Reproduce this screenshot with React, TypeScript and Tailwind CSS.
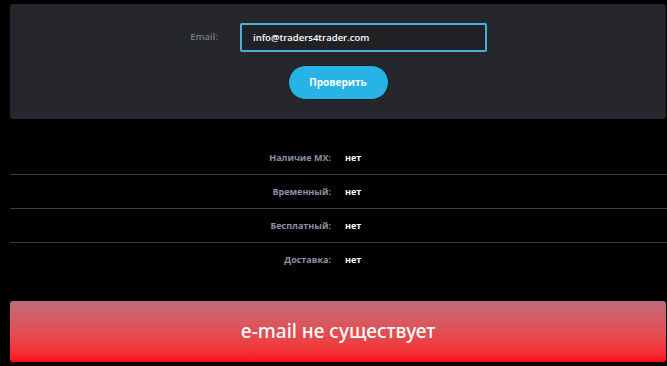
import { useState } from "react";

const filas = [
  { k: "mx", label: "Наличие MX:", valor: "нет" },
  { k: "temp", label: "Временный:", valor: "нет" },
  { k: "free", label: "Бесплатный:", valor: "нет" },
  { k: "deliv", label: "Доставка:", valor: "нет" },
];

export default function App() {
  const [email, setEmail] = useState("info@traders4trader.com");

  return (
    <div className="min-h-[366px] w-[667px] bg-black pt-[4px] font-['Open_Sans',sans-serif]">
      {/* form panel */}
      <div className="ml-[10px] mr-[1px] h-[115px] rounded-[3px] bg-[#25272c]">
        <div className="flex items-center pt-[19px]">
          <label className="w-[230px] pr-[22px] text-right text-[9.5px] font-semibold text-[#737b89]">Email:</label>
          <input
            value={email}
            onChange={(e) => setEmail(e.target.value)}
            className="h-[29px] w-[247px] rounded-[2px] border-2 border-[#4bb0d6] bg-[#1f2125] px-[11px] text-[9.5px] font-semibold text-white outline-none"
          />
        </div>
        <div className="mt-[13px] flex justify-center">
          <button className="h-[35px] w-[101px] rounded-full border border-[#15181c] bg-[#27b3e6] text-[10px] font-bold text-white">
            Проверить
          </button>
        </div>
      </div>

      {/* results */}
      <div className="ml-[10px] mt-[22px]">
        {filas.map((f, i) => (
          <div
            key={f.k}
            className={"flex h-[34px] items-center " + (i < filas.length - 1 ? "border-b border-[#3b3c40]" : "")}
          >
            <span className="w-[321px] text-right text-[9px] font-bold text-[#8a92a3]">{f.label}</span>
            <span className="ml-[14px] text-[9px] font-bold text-white">{f.valor}</span>
          </div>
        ))}
      </div>

      {/* status banner */}
      <div className="ml-[10px] mr-[1px] mt-[24px] flex h-[61px] items-center justify-center rounded-[3px] bg-gradient-to-b from-[#c16a79] to-[#fd0819]">
        <span className="text-[19px] font-medium text-white font-['Noto_Sans',sans-serif]">e-mail не существует</span>
      </div>
    </div>
  );
}
